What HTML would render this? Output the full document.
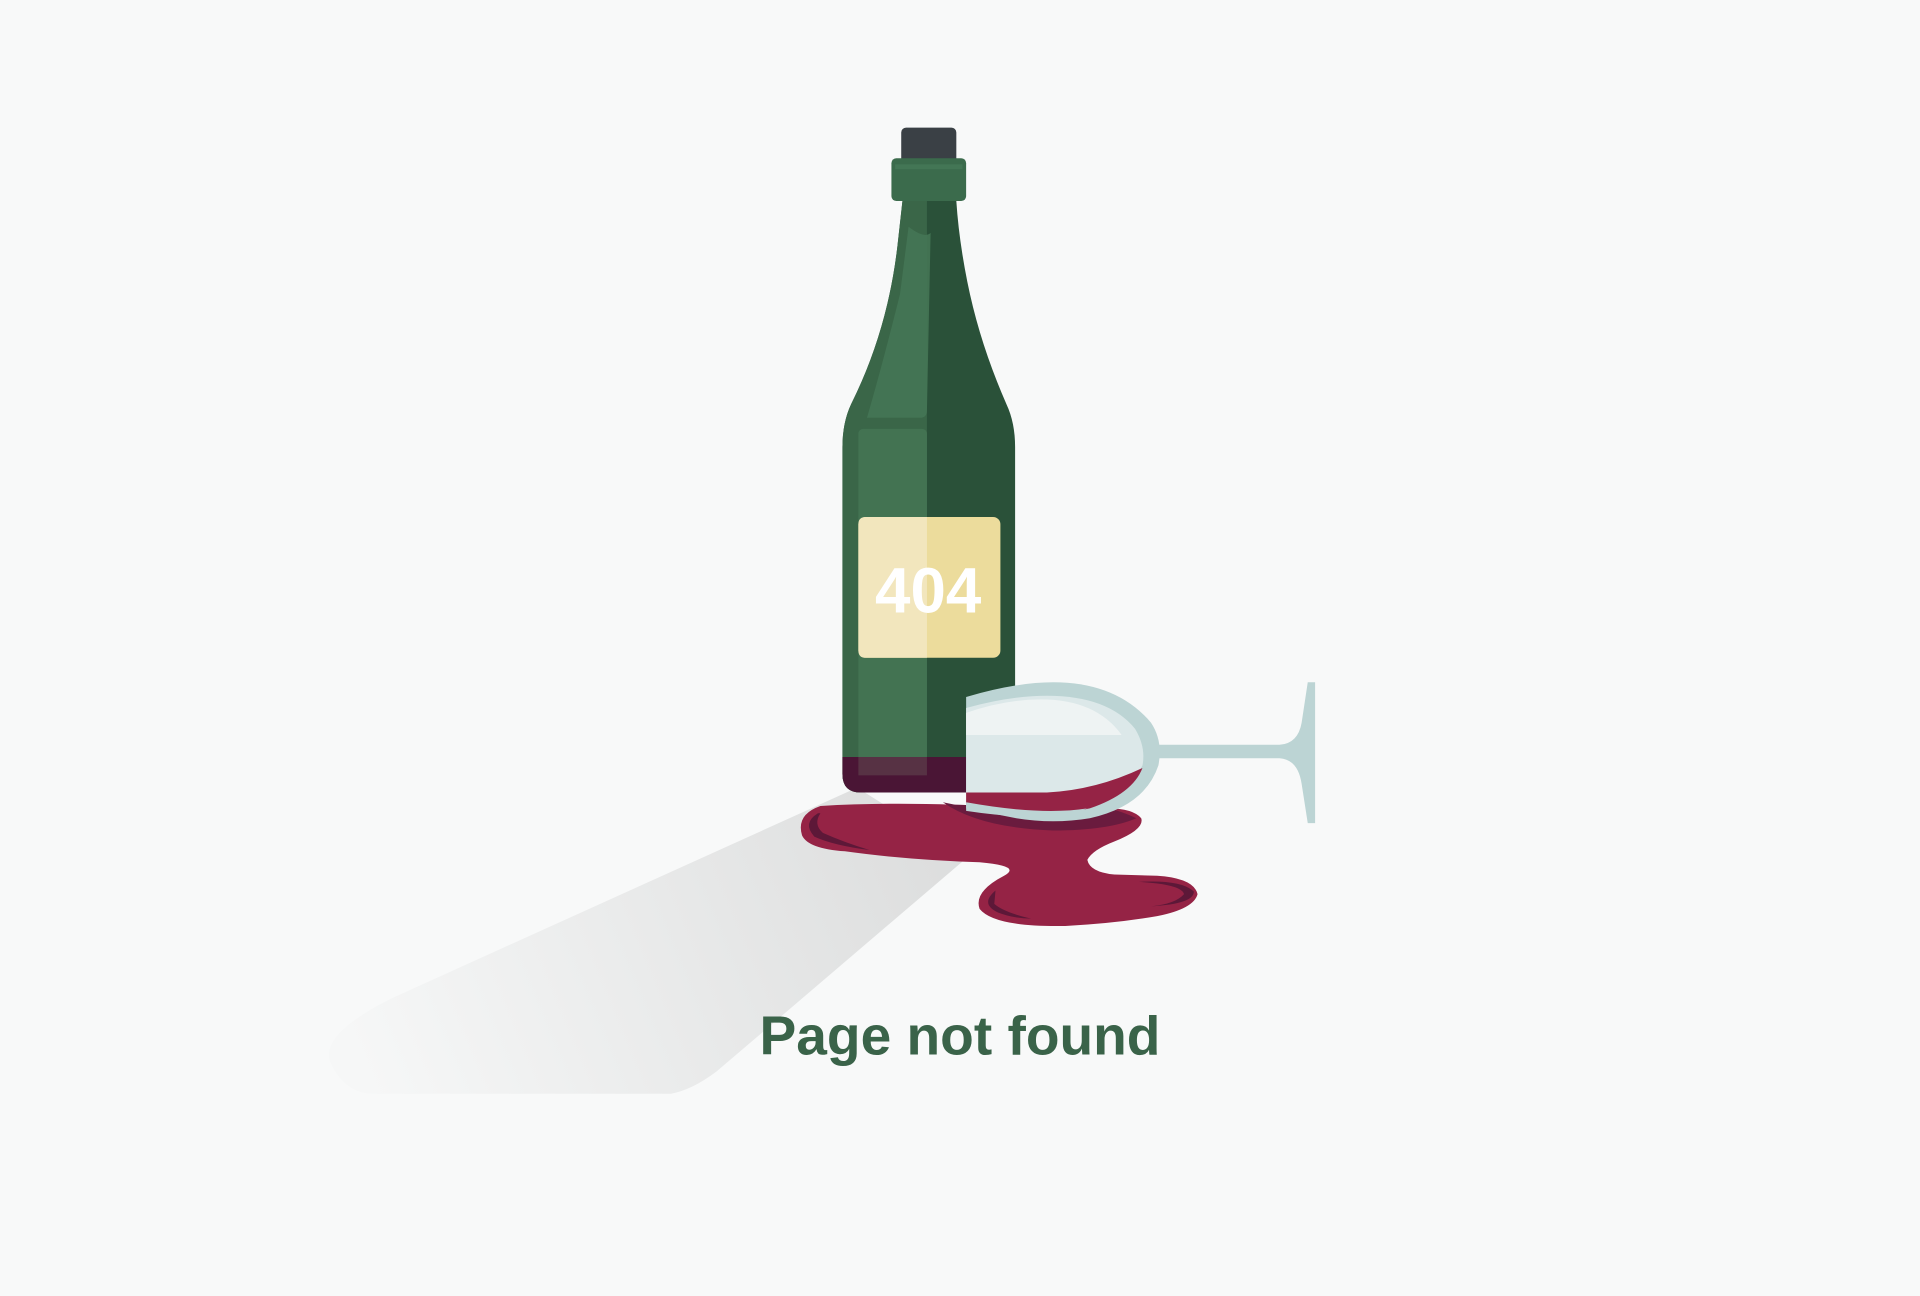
<!DOCTYPE html>
<html><head><meta charset="utf-8"><style>
html,body{margin:0;padding:0;background:#f8f9f9;width:1920px;height:1296px;overflow:hidden}
svg{display:block}
</style></head><body>
<svg width="1920" height="1296" viewBox="0 0 1568 1058" xmlns="http://www.w3.org/2000/svg">
<defs>
<linearGradient id="sh" x1="780" y1="680" x2="300" y2="880" gradientUnits="userSpaceOnUse">
<stop offset="0" stop-color="#dcdddd"/><stop offset="1" stop-color="#f6f7f7"/>
</linearGradient>
</defs>
<rect width="1568" height="1058" fill="#f8f9f9"/>
<path d="M700,643 L320,815 Q260,845 270,868 Q282,893 305,893 L548,893 Q565,890 585,875 L790,700 Z" fill="url(#sh)"/>
<rect x="736" y="104" width="45" height="32" rx="4" fill="#3a4045"/>
<path d="M737,164 L733,200 Q725,270 695,330 Q688,345 688,365 L688,632 Q688,647 703,647 L814,647 Q829,647 829,632 L829,365 Q829,345 822,330 Q800,280 790,230 Q783,195 781,164 Z" fill="#2a5139"/>
<path d="M737,164 L733,200 Q725,270 695,330 Q688,345 688,365 L688,632 Q688,647 703,647 L757,647 L757,164 Z" fill="#3a6648"/>
<path d="M742,185 Q755,195 760,190 L757,335 Q757,341 751,341 L708,341 Q720,300 735,240 Z" fill="#457655" opacity="0.9"/>
<rect x="701" y="350" width="56" height="283" rx="4" fill="#457655" opacity="0.85"/>
<path d="M688,618 L829,618 L829,647 L703,647 Q688,647 688,632 Z" fill="#4a1535"/>
<rect x="701" y="618" width="56" height="15" fill="#5a3a48" opacity="0.8"/>
<rect x="728" y="129" width="61" height="35" rx="4" fill="#3b6b4c"/>
<rect x="731" y="134" width="55" height="4" fill="#437655"/>
<rect x="701" y="422" width="116" height="115" rx="6" fill="#ecdc9c"/>
<path d="M707,422 L757,422 L757,537 L707,537 Q701,537 701,531 L701,428 Q701,422 707,422 Z" fill="#f2e6bd"/>
<text x="758" y="500" text-anchor="middle" font-family="Liberation Sans, sans-serif" font-weight="bold" font-size="52" fill="#ffffff">404</text>
<path d="M670,658 Q650,665 655,682 Q660,693 690,695 Q740,702 800,704 Q835,707 820,715 Q795,728 800,742 Q812,757 870,756 Q910,754 945,748 Q975,742 978,730 Q975,717 945,715 L910,714 Q890,712 888,702 Q892,694 910,687 Q935,677 932,668 Q925,660 905,660 L780,657 Q720,655 670,658 Z" fill="#952345"/>
<path d="M668,664 Q655,672 665,683 Q680,690 710,694 Q690,688 672,680 Q664,673 670,664 Z" fill="#5d1838"/>
<path d="M813,727 Q800,738 815,745 Q828,750 842,750 Q820,745 812,738 Z" fill="#5d1838"/>
<path d="M930,720 Q965,722 967,730 Q960,738 940,740 Q975,738 975,728 Q965,718 930,720 Z" fill="#5d1838"/>
<path d="M770,655 Q800,676 860,678 Q905,678 928,668 Q915,662 905,660 L780,657 Z" fill="#6a1b3e"/>
<path d="M1068,557 L1074,557 L1074,672 L1068,672 L1063,640 Q1060,620 1045,619 L946,619 L946,608 L1045,608 Q1060,607 1063,590 Z" fill="#bcd4d4"/>
<path d="M789,569 Q830,557 860,557 Q912,557 940,590 Q950,605 946,625 Q935,658 890,668 Q860,673 830,668 L789,660 Z" fill="#bcd4d4"/>
<path d="M789,578 Q825,568 855,568 Q905,568 927,595 Q936,610 933,625 Q920,650 885,660 Q850,665 789,655 Z" fill="#dce8e9"/>
<path d="M789,582 Q820,571 850,571 Q895,571 916,600 L789,600 Z" fill="#eef3f3"/>
<path d="M789,647 L855,647 Q895,645 933,627 Q925,648 890,660 Q855,668 789,656 Z" fill="#952345"/>
<path d="M789,655 Q850,666 888,660 Q855,672 789,662 Z" fill="#bcd4d4"/>
<text x="784" y="861" text-anchor="middle" font-family="Liberation Sans, sans-serif" font-weight="bold" font-size="45" fill="#3a6349">Page not found</text>
</svg>
</body></html>
